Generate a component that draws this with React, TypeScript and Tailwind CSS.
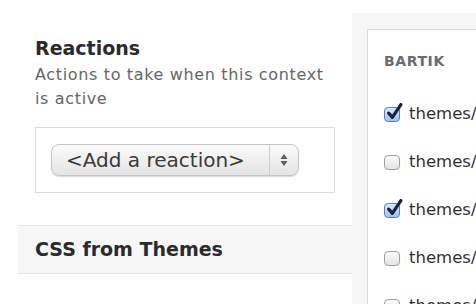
import React from 'react';

const themes = [true, false, true, false, false];

function Checkbox({ checked }: { checked: boolean }) {
  if (checked) {
    return (
      <span className="relative inline-block w-[16px] h-[15px] shrink-0 rounded-[4px] border border-[#5a7fb5] bg-gradient-to-b from-[#dbe9fb] to-[#9ec3f0]">
        <svg viewBox="0 0 16 16" className="absolute left-[1px] top-[-5px] w-[17px] h-[17px]">
          <path d="M2.5 9.5 L6 13.5 L14 1.5" fill="none" stroke="#16233f" strokeWidth="3" strokeLinecap="round" strokeLinejoin="round" />
        </svg>
      </span>
    );
  }
  return (
    <span className="inline-block w-[16px] h-[15px] shrink-0 rounded-[4px] border border-[#a0a0a0] bg-gradient-to-b from-[#fdfdfd] to-[#e2e2e2]" />
  );
}

export default function App() {
  return (
    <div className="w-[476px] h-[304px] overflow-hidden bg-white flex font-['DejaVu_Sans',sans-serif]">
      {/* Left column */}
      <div className="w-[352px] shrink-0">
        <div className="pl-[35px] pt-[36px] pr-[18px]">
          <h2 className="text-[19px] leading-[24px] font-bold text-[#2b2b2b]">Reactions</h2>
          <p className="text-[16px] tracking-[0.65px] leading-[24px] text-[#666] mt-[3px]">Actions to take when this context is active</p>
          <div className="mt-[16px] w-[300px] border border-[#dcdcdc] px-[15px] pt-[16px] pb-[16px]">
            <div className="flex items-stretch w-[248px] h-[32px] rounded-[8px] border border-[#c4c4c4] bg-gradient-to-b from-[#fbfbfb] to-[#e4e4e4] shadow-[0_1px_1px_rgba(0,0,0,0.15)]">
              <span className="flex-1 pl-[14px] text-[20px] leading-[30px] text-[#3a3a3a]">&lt;Add a reaction&gt;</span>
              <span className="w-[29px] border-l border-[#cfcfcf] flex items-center justify-center">
                <svg viewBox="0 0 8 14" className="w-[8px] h-[14px]">
                  <path d="M4 1 L7.5 6 L0.5 6 Z" fill="#5b5b5b" />
                  <path d="M4 13 L7.5 8 L0.5 8 Z" fill="#5b5b5b" />
                </svg>
              </span>
            </div>
          </div>
        </div>
        <div className="mt-[32px] ml-[18px] h-[49px] border-y border-[#e6e6e6] bg-[#f7f7f7] pl-[17px] flex items-center">
          <h2 className="text-[19px] font-bold text-[#2b2b2b]">CSS from Themes</h2>
        </div>
      </div>

      {/* Right column */}
      <div className="flex-1 pt-[13px]">
        <div className="h-full bg-[#f6f6f6] pl-[15px] pt-[16px]">
          <div className="h-full bg-white border-l border-t border-[#dcdcdc] pl-[16px] pt-[22px]">
            <div className="text-[14px] leading-[18px] font-bold text-[#6b6b6b] tracking-[0.6px]">BARTIK</div>
            <ul className="mt-[32px] flex flex-col gap-[24px] whitespace-nowrap">
              {themes.map((c, i) => (
                <li key={i} className="flex items-center gap-[9px] h-[24px]">
                  <Checkbox checked={c} />
                  <span className="text-[16.5px] text-[#333]">themes/bartik/css/style.css</span>
                </li>
              ))}
            </ul>
          </div>
        </div>
      </div>
    </div>
  );
}
